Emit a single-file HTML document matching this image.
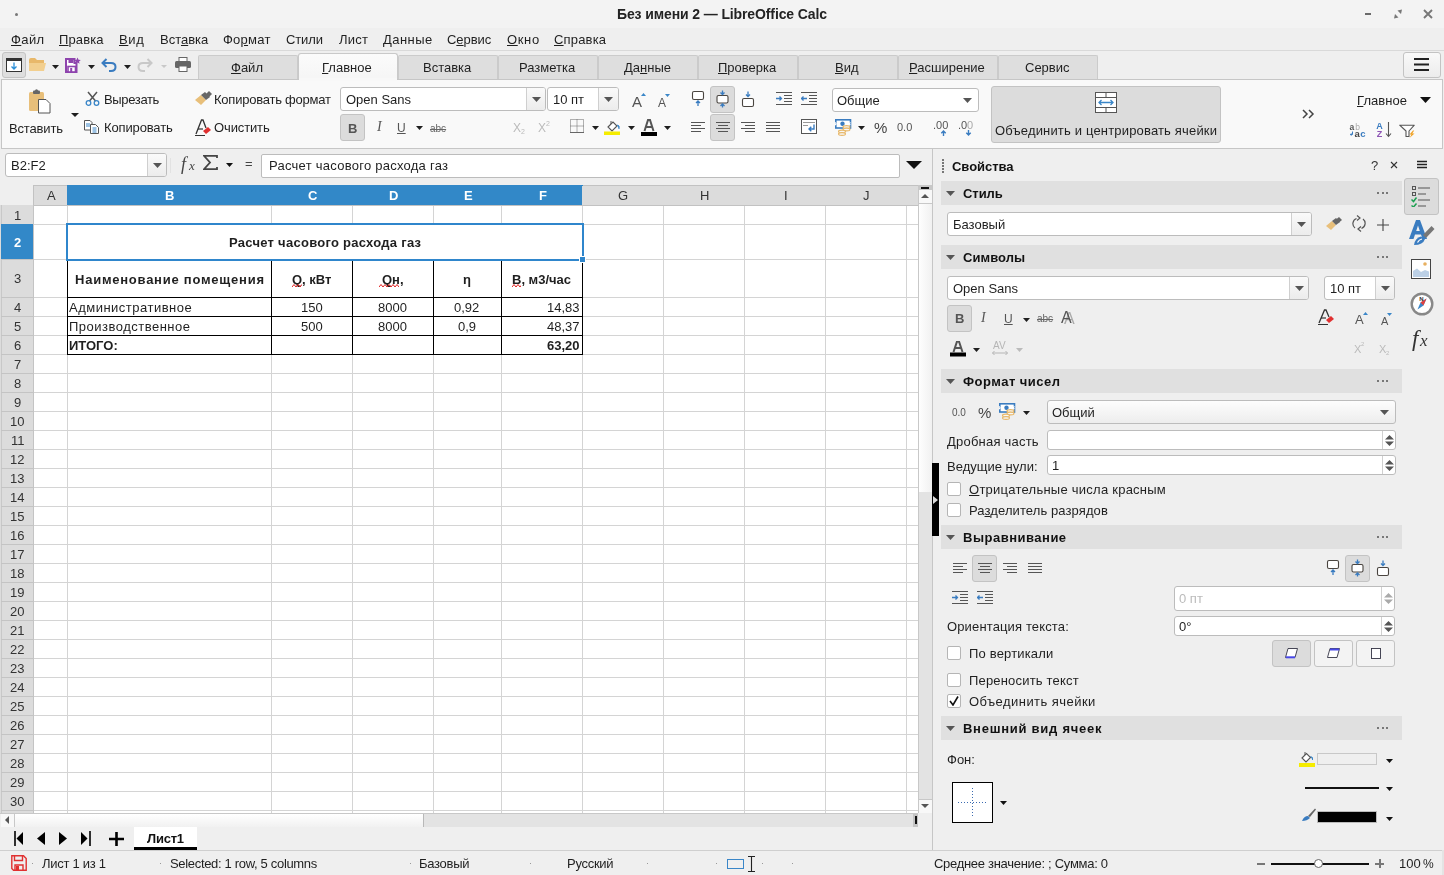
<!DOCTYPE html><html><head><meta charset="utf-8"><title>LibreOffice Calc</title><style>
html,body{margin:0;padding:0;}
body{width:1444px;height:875px;overflow:hidden;position:relative;background:#efefef;font-family:"Liberation Sans",sans-serif;font-size:13px;color:#1f1f1f;}
body div, body svg{position:absolute;}
.t{white-space:nowrap;will-change:transform;}
u{text-decoration:underline;text-underline-offset:1px;}
</style></head><body>
<div style="left:0px;top:0px;width:1444px;height:28px;background:#f3f3f3"></div>
<div style="left:15px;top:13px;width:3px;height:3px;background:#777;border-radius:50%"></div>
<div class="t" style="left:617.00px;top:7.15px;font-size:14px;line-height:14px;color:#232323;font-weight:bold;letter-spacing:-0.113px;">Без имени 2 — LibreOffice Calc</div>
<div style="left:1365px;top:13px;width:6px;height:2px;background:#6a6a6a"></div>
<svg style="left:1393px;top:9px;" width="10" height="10" viewBox="0 0 10 10"><path d="M1 9.5L2 5L5.5 8.5Z M9 0.5L8 5L4.5 1.5Z" fill="#777"/></svg>
<svg style="left:1423px;top:9px;" width="10" height="10" viewBox="0 0 10 10"><path d="M1 1L9 9M9 1L1 9" stroke="#777" stroke-width="1.9"/></svg>
<div style="left:0px;top:28px;width:1444px;height:22px;background:#efefef"></div>
<div style="left:0px;top:50px;width:1444px;height:1px;background:#d9d9d9"></div>
<div class="t" style="left:11.10px;top:33.00px;font-size:13px;line-height:13px;color:#1f1f1f;letter-spacing:0.410px;"><u>Ф</u>айл</div>
<div class="t" style="left:59.40px;top:33.00px;font-size:13px;line-height:13px;color:#1f1f1f;letter-spacing:0.136px;"><u>П</u>равка</div>
<div class="t" style="left:119.20px;top:33.00px;font-size:13px;line-height:13px;color:#1f1f1f;letter-spacing:0.642px;"><u>В</u>ид</div>
<div class="t" style="left:159.60px;top:33.00px;font-size:13px;line-height:13px;color:#1f1f1f;letter-spacing:-0.005px;">Вст<u>а</u>вка</div>
<div class="t" style="left:223.40px;top:33.00px;font-size:13px;line-height:13px;color:#1f1f1f;letter-spacing:0.239px;">Фо<u>р</u>мат</div>
<div class="t" style="left:286.30px;top:33.00px;font-size:13px;line-height:13px;color:#1f1f1f;letter-spacing:-0.113px;">Стили</div>
<div class="t" style="left:339.40px;top:33.00px;font-size:13px;line-height:13px;color:#1f1f1f;letter-spacing:0.217px;">Лист</div>
<div class="t" style="left:383.10px;top:33.00px;font-size:13px;line-height:13px;color:#1f1f1f;letter-spacing:0.449px;"><u>Д</u>анные</div>
<div class="t" style="left:447.40px;top:33.00px;font-size:13px;line-height:13px;color:#1f1f1f;letter-spacing:-0.046px;">С<u>е</u>рвис</div>
<div class="t" style="left:507.20px;top:33.00px;font-size:13px;line-height:13px;color:#1f1f1f;letter-spacing:0.632px;"><u>О</u>кно</div>
<div class="t" style="left:554.40px;top:33.00px;font-size:13px;line-height:13px;color:#1f1f1f;letter-spacing:0.181px;"><u>С</u>правка</div>
<div style="left:0px;top:51px;width:1444px;height:29px;background:#efefef"></div>
<div style="left:2px;top:52px;width:24px;height:26px;background:#dedede;border:1px solid #c4c4c4;border-radius:3px;box-sizing:border-box"></div>
<svg style="left:6px;top:58px;" width="16" height="14" viewBox="0 0 16 14"><rect x="0.5" y="0.5" width="15" height="13" fill="#fff" stroke="#333"/><rect x="0.5" y="0.5" width="15" height="2.5" fill="#333"/><path d="M8 4.5V11M5.5 8.5L8 11L10.5 8.5" stroke="#2a8fd8" stroke-width="1.3" fill="none"/></svg>
<svg style="left:29px;top:58px;" width="17" height="14" viewBox="0 0 17 14"><path d="M0 2Q0 0 2 0H6L8 2H15V13H0Z" fill="#e8b86a"/><path d="M0 5H17L15 13H0Z" fill="#f2cf8f"/></svg>
<svg style="left:52.0px;top:64.5px;" width="7" height="4" viewBox="0 0 7 4"><path d="M0 0H7L3.5 4Z" fill="#1f1f1f"/></svg>
<svg style="left:65px;top:57px;" width="16" height="16" viewBox="0 0 16 16"><path d="M1 2H9.5V6H11.5V15H1Z" fill="#fff" stroke="#8e44ad" stroke-width="2" stroke-linejoin="miter"/><rect x="3.5" y="2" width="5" height="4" fill="#8e44ad"/><rect x="3" y="9.5" width="7.5" height="5.5" fill="#fff" stroke="#8e44ad" stroke-width="1.6"/><rect x="5.2" y="11" width="2" height="4" fill="#8e44ad"/><path d="M12.5 0.5L13.5 2.8L15.8 3L14 4.5L14.6 6.8L12.5 5.5L10.4 6.8L11 4.5L9.2 3L11.5 2.8Z" fill="#8e44ad"/></svg>
<svg style="left:88.0px;top:64.5px;" width="7" height="4" viewBox="0 0 7 4"><path d="M0 0H7L3.5 4Z" fill="#1f1f1f"/></svg>
<svg style="left:101px;top:58px;" width="16" height="14" viewBox="0 0 16 14"><path d="M2 5H10Q14.5 5 14.5 9Q14.5 13 10 13H8" stroke="#3a7cc0" stroke-width="2" fill="none"/><path d="M5.5 1L1.5 5L5.5 9" stroke="#3a7cc0" stroke-width="2" fill="none"/></svg>
<svg style="left:124.0px;top:64.5px;" width="7" height="4" viewBox="0 0 7 4"><path d="M0 0H7L3.5 4Z" fill="#1f1f1f"/></svg>
<svg style="left:137px;top:58px;" width="16" height="14" viewBox="0 0 16 14"><path d="M14 5H6Q1.5 5 1.5 9Q1.5 13 6 13H8" stroke="#c8c8c8" stroke-width="2" fill="none"/><path d="M10.5 1L14.5 5L10.5 9" stroke="#c8c8c8" stroke-width="2" fill="none"/></svg>
<svg style="left:160.5px;top:65.0px;" width="6" height="3" viewBox="0 0 6 3"><path d="M0 0H6L3.0 3Z" fill="#c8c8c8"/></svg>
<svg style="left:175px;top:57px;" width="16" height="15" viewBox="0 0 16 15"><rect x="4" y="0.5" width="8" height="4" fill="#fff" stroke="#666"/><rect x="0" y="4" width="16" height="7" rx="1.5" fill="#666"/><rect x="4" y="9" width="8" height="5.5" fill="#fff" stroke="#666"/></svg>
<div style="left:198px;top:55px;width:100px;height:25px;background:#dedede;border:1px solid #cbcbcb;border-bottom:none;border-radius:2px 2px 0 0;box-sizing:border-box"></div>
<div class="t" style="left:231.02px;top:61.00px;font-size:13px;line-height:13px;color:#1f1f1f;"><u>Ф</u>айл</div>
<div style="left:298px;top:53px;width:100px;height:28px;background:linear-gradient(#fbfbfb,#f5f5f5);border:1px solid #c9c9c9;border-bottom:none;border-radius:3px 3px 0 0;box-sizing:border-box"></div>
<div class="t" style="left:322.16px;top:61.00px;font-size:13px;line-height:13px;color:#1f1f1f;"><u>Г</u>лавное</div>
<div style="left:299px;top:78px;width:98px;height:3px;background:#f8f8f8;z-index:2"></div>
<div style="left:398px;top:55px;width:100px;height:25px;background:#dedede;border:1px solid #cbcbcb;border-bottom:none;border-radius:2px 2px 0 0;box-sizing:border-box"></div>
<div class="t" style="left:422.84px;top:61.00px;font-size:13px;line-height:13px;color:#1f1f1f;">Вставка</div>
<div style="left:498px;top:55px;width:100px;height:25px;background:#dedede;border:1px solid #cbcbcb;border-bottom:none;border-radius:2px 2px 0 0;box-sizing:border-box"></div>
<div class="t" style="left:518.91px;top:61.00px;font-size:13px;line-height:13px;color:#1f1f1f;">Разметка</div>
<div style="left:598px;top:55px;width:100px;height:25px;background:#dedede;border:1px solid #cbcbcb;border-bottom:none;border-radius:2px 2px 0 0;box-sizing:border-box"></div>
<div class="t" style="left:623.52px;top:61.00px;font-size:13px;line-height:13px;color:#1f1f1f;">Да<u>н</u>ные</div>
<div style="left:698px;top:55px;width:100px;height:25px;background:#dedede;border:1px solid #cbcbcb;border-bottom:none;border-radius:2px 2px 0 0;box-sizing:border-box"></div>
<div class="t" style="left:717.88px;top:61.00px;font-size:13px;line-height:13px;color:#1f1f1f;"><u>П</u>роверка</div>
<div style="left:798px;top:55px;width:100px;height:25px;background:#dedede;border:1px solid #cbcbcb;border-bottom:none;border-radius:2px 2px 0 0;box-sizing:border-box"></div>
<div class="t" style="left:835.24px;top:61.00px;font-size:13px;line-height:13px;color:#1f1f1f;"><u>В</u>ид</div>
<div style="left:898px;top:55px;width:100px;height:25px;background:#dedede;border:1px solid #cbcbcb;border-bottom:none;border-radius:2px 2px 0 0;box-sizing:border-box"></div>
<div class="t" style="left:909.10px;top:61.00px;font-size:13px;line-height:13px;color:#1f1f1f;"><u>Р</u>асширение</div>
<div style="left:998px;top:55px;width:100px;height:25px;background:#dedede;border:1px solid #cbcbcb;border-bottom:none;border-radius:2px 2px 0 0;box-sizing:border-box"></div>
<div class="t" style="left:1024.73px;top:61.00px;font-size:13px;line-height:13px;color:#1f1f1f;">Сервис</div>
<div style="left:1403px;top:52px;width:38px;height:26px;background:linear-gradient(#f9f9f9,#ececec);border:1px solid #c3c3c3;border-radius:3px;box-sizing:border-box"></div>
<svg style="left:1414px;top:58px;" width="15" height="13" viewBox="0 0 15 13"><rect x="0" y="0" width="15" height="2" fill="#222"/><rect x="0" y="5.5" width="15" height="2" fill="#222"/><rect x="0" y="11" width="15" height="2" fill="#222"/></svg>
<div style="left:1px;top:79px;width:1442px;height:70px;background:#f9f9f9;border:1px solid #c6c6c6;box-sizing:border-box;z-index:1"></div>
<div style="left:0;top:0;width:1444px;height:875px;z-index:3">
<svg style="left:28px;top:89px;" width="24" height="25" viewBox="0 0 24 25"><rect x="1" y="3" width="15" height="19" rx="1.5" fill="#e8bf7a"/><rect x="5" y="1.5" width="7" height="3.5" rx="1" fill="#666"/><circle cx="8.5" cy="1.8" r="1.5" fill="#666"/><path d="M10.5 10.5H18L22 14.5V24H10.5Z" fill="#fff" stroke="#555"/></svg>
<div class="t" style="left:9.40px;top:122.00px;font-size:13px;line-height:13px;color:#1f1f1f;letter-spacing:-0.158px;">Вставить</div>
<svg style="left:70.5px;top:113.0px;" width="8" height="4" viewBox="0 0 8 4"><path d="M0 0H8L4.0 4Z" fill="#1f1f1f"/></svg>
<svg style="left:85px;top:91px;" width="15" height="15" viewBox="0 0 15 15"><path d="M3 1L10.5 10M12 1L4.5 10" stroke="#555" stroke-width="1.5"/><circle cx="3.5" cy="12" r="2.3" fill="none" stroke="#3a86c8" stroke-width="1.3"/><circle cx="11.5" cy="12" r="2.3" fill="none" stroke="#3a86c8" stroke-width="1.3"/></svg>
<div class="t" style="left:103.60px;top:92.80px;font-size:13px;line-height:13px;color:#1f1f1f;letter-spacing:-0.347px;">Вырезать</div>
<svg style="left:84px;top:120px;" width="15" height="14" viewBox="0 0 15 14"><path d="M0.5 0.5H6L8 2.5V10H0.5Z" fill="#fff" stroke="#555"/><path d="M6.5 4.5H11.5L14.5 7.5V13.5H6.5Z" fill="#fff" stroke="#555"/><path d="M2 4H6M2 6H6M8.5 8H12.5M8.5 10H12.5M8.5 12H12.5" stroke="#3a86c8" stroke-width="1"/></svg>
<div class="t" style="left:103.60px;top:120.60px;font-size:13px;line-height:13px;color:#1f1f1f;letter-spacing:-0.137px;">Копировать</div>
<svg style="left:195px;top:91px;" width="17" height="15" viewBox="0 0 17 15"><path d="M0 9L6 4L11 9L6 14Z" fill="#e8bf7a"/><path d="M6 4L10 1L15 6L11 9Z" fill="#666"/><path d="M11 3L14 0L17 3L14 6Z" fill="#666"/></svg>
<div class="t" style="left:214.30px;top:92.80px;font-size:13px;line-height:13px;color:#1f1f1f;letter-spacing:-0.229px;">Копировать формат</div>
<svg style="left:195px;top:119px;" width="17" height="18" viewBox="0 0 17 18"><path d="M1 15L6.5 1H8L11 9" stroke="#333" stroke-width="1.3" fill="none"/><path d="M3 10H8" stroke="#333" stroke-width="1.2"/><path d="M8 12L13 8L16 11L11 15Z" fill="#e03030"/><path d="M0 16.5H10" stroke="#333" stroke-width="1"/></svg>
<div class="t" style="left:214.30px;top:120.60px;font-size:13px;line-height:13px;color:#1f1f1f;letter-spacing:-0.125px;">Очистить</div>
<div style="left:340px;top:87px;width:206px;height:24px;background:#fff;border:1px solid #bcbcbc;border-radius:3px;box-sizing:border-box"></div>
<div style="left:526px;top:88px;width:19px;height:22px;background:linear-gradient(#fafafa,#ececec);border-left:1px solid #cfcfcf;border-radius:0 2px 2px 0;box-sizing:border-box"></div>
<svg style="left:531.5px;top:96.5px;" width="9" height="5" viewBox="0 0 9 5"><path d="M0 0H9L4.5 5Z" fill="#555"/></svg>
<div class="t" style="left:346.00px;top:92.50px;font-size:13px;line-height:13px;color:#1f1f1f;">Open Sans</div>
<div style="left:547px;top:87px;width:72px;height:24px;background:#fff;border:1px solid #bcbcbc;border-radius:3px;box-sizing:border-box"></div>
<div style="left:598px;top:88px;width:20px;height:22px;background:linear-gradient(#fafafa,#ececec);border-left:1px solid #cfcfcf;border-radius:0 2px 2px 0;box-sizing:border-box"></div>
<svg style="left:604.0px;top:96.5px;" width="9" height="5" viewBox="0 0 9 5"><path d="M0 0H9L4.5 5Z" fill="#555"/></svg>
<div class="t" style="left:553.00px;top:92.50px;font-size:13px;line-height:13px;color:#1f1f1f;">10 пт</div>
<div class="t" style="left:632.00px;top:94.30px;font-size:15px;line-height:15px;color:#555;">A</div>
<svg style="left:641px;top:93px;" width="5" height="3" viewBox="0 0 5 3"><path d="M0 3L2.5 0L5 3Z" fill="#3a86c8"/></svg>
<div class="t" style="left:658.00px;top:96.84px;font-size:12px;line-height:12px;color:#555;">A</div>
<svg style="left:665px;top:94px;" width="5" height="3" viewBox="0 0 5 3"><path d="M0 0L2.5 3L5 0Z" fill="#3a86c8"/></svg>
<div style="left:340px;top:114px;width:25px;height:27px;background:#dcdcdc;border:1px solid #c3c3c3;border-radius:3px;box-sizing:border-box"></div>
<div class="t" style="left:347.80px;top:121.50px;font-size:13px;line-height:13px;color:#555;font-weight:bold;">B</div>
<div class="t" style="left:377.00px;top:120.15px;font-size:14px;line-height:14px;color:#555;font-family:Liberation Serif,serif;font-style:italic;">I</div>
<div class="t" style="left:396.66px;top:122.34px;font-size:12px;line-height:12px;color:#555;text-decoration:underline;">U</div>
<svg style="left:416.0px;top:126.0px;" width="7" height="4" viewBox="0 0 7 4"><path d="M0 0H7L3.5 4Z" fill="#1f1f1f"/></svg>
<div class="t" style="left:430.00px;top:123.53px;font-size:10px;line-height:10px;color:#666;text-decoration:line-through;">abc</div>
<div class="t" style="left:513.00px;top:122.34px;font-size:12px;line-height:12px;color:#bbb;">X</div>
<div class="t" style="left:521.00px;top:128.07px;font-size:7px;line-height:7px;color:#bbb;">2</div>
<div class="t" style="left:538.00px;top:122.34px;font-size:12px;line-height:12px;color:#bbb;">X</div>
<div class="t" style="left:546.00px;top:120.07px;font-size:7px;line-height:7px;color:#bbb;">2</div>
<svg style="left:570px;top:119px;" width="14" height="14" viewBox="0 0 14 14"><path d="M0.5 0.5H13.5V13.5H0.5ZM7 0.5V13.5M0.5 7H13.5" stroke="#666" stroke-width="1" stroke-dasharray="1 1" fill="none"/><path d="M0 13.5H14" stroke="#666" stroke-width="1"/></svg>
<svg style="left:592.0px;top:126.0px;" width="7" height="4" viewBox="0 0 7 4"><path d="M0 0H7L3.5 4Z" fill="#1f1f1f"/></svg>
<svg style="left:604px;top:119px;" width="17" height="16" viewBox="0 0 17 16"><path d="M4 8L9 3L13 7L8 12Z" fill="#fff" stroke="#555" stroke-width="1.1"/><path d="M7 2V5" stroke="#555"/><path d="M13 6Q16 6 15 10" fill="#3a86c8" stroke="#3a86c8"/><rect x="0" y="12.5" width="16" height="3.5" fill="#f5ec00"/></svg>
<svg style="left:628.0px;top:126.0px;" width="7" height="4" viewBox="0 0 7 4"><path d="M0 0H7L3.5 4Z" fill="#1f1f1f"/></svg>
<svg style="left:641px;top:119px;" width="16" height="17" viewBox="0 0 16 17"><path d="M3.5 12L7 1H9L12.5 12M5.2 8H10.8" stroke="#555" stroke-width="2" fill="none"/><rect x="0" y="13" width="16" height="4" fill="#000"/></svg>
<svg style="left:664.0px;top:126.0px;" width="7" height="4" viewBox="0 0 7 4"><path d="M0 0H7L3.5 4Z" fill="#1f1f1f"/></svg>
<svg style="left:691px;top:90px;" width="14" height="17" viewBox="0 0 14 17"><rect x="1.5" y="1.5" width="11" height="8" rx="1.5" fill="#fff" stroke="#4a4540" stroke-width="1.1"/><path d="M7 11V16M5 13L7 11L9 13" stroke="#3a7cc0" stroke-width="1.3" fill="none"/></svg>
<div style="left:710px;top:86px;width:25px;height:27px;background:#dcdcdc;border:1px solid #c3c3c3;border-radius:3px;box-sizing:border-box"></div>
<svg style="left:715px;top:90px;" width="15" height="18" viewBox="0 0 15 18"><rect x="2" y="5.5" width="11" height="7.5" rx="1.5" fill="#fff" stroke="#4a4540" stroke-width="1.1"/><path d="M7.5 0.5V4.5M5.5 2.5L7.5 4.5L9.5 2.5M7.5 17.5V14M5.5 16L7.5 14L9.5 16" stroke="#3a7cc0" stroke-width="1.3" fill="none"/></svg>
<svg style="left:741px;top:90px;" width="14" height="18" viewBox="0 0 14 18"><rect x="1.5" y="8.5" width="11" height="8" rx="1.5" fill="#fff" stroke="#4a4540" stroke-width="1.1"/><path d="M7 1.5V6.5M5 4.5L7 6.5L9 4.5" stroke="#3a7cc0" stroke-width="1.3" fill="none"/></svg>
<svg style="left:776px;top:92px;" width="16" height="13" viewBox="0 0 16 13"><path d="M0 0.5H16M8 3.5H16M8 6.5H16M8 9.5H16M0 12.5H16" stroke="#555"/><path d="M0 6.5H5.5M3.5 4.5L5.5 6.5L3.5 8.5" stroke="#3a7cc0" stroke-width="1.3" fill="none"/></svg>
<svg style="left:801px;top:92px;" width="16" height="13" viewBox="0 0 16 13"><path d="M0 0.5H16M8 3.5H16M8 6.5H16M8 9.5H16M0 12.5H16" stroke="#555"/><path d="M6 6.5H0.5M2.5 4.5L0.5 6.5L2.5 8.5" stroke="#3a7cc0" stroke-width="1.3" fill="none"/></svg>
<div style="left:832px;top:88px;width:147px;height:24px;background:#fff;border:1px solid #bcbcbc;border-radius:3px;box-sizing:border-box"></div>
<div class="t" style="left:837.00px;top:93.50px;font-size:13px;line-height:13px;color:#1f1f1f;">Общие</div>
<svg style="left:962.5px;top:97.5px;" width="9" height="5" viewBox="0 0 9 5"><path d="M0 0H9L4.5 5Z" fill="#555"/></svg>
<div style="left:710px;top:114px;width:25px;height:27px;background:#dcdcdc;border:1px solid #c3c3c3;border-radius:3px;box-sizing:border-box"></div>
<svg style="left:691px;top:122px;" width="14" height="10" viewBox="0 0 14 10"><path d="M0 0.5H14M0 3.5H10M0 6.5H14M0 9.5H10" stroke="#555"/></svg>
<svg style="left:716px;top:122px;" width="14" height="10" viewBox="0 0 14 10"><path d="M0 0.5H14M2 3.5H12M0 6.5H14M2 9.5H12" stroke="#555"/></svg>
<svg style="left:741px;top:122px;" width="14" height="10" viewBox="0 0 14 10"><path d="M0 0.5H14M4 3.5H14M0 6.5H14M4 9.5H14" stroke="#555"/></svg>
<svg style="left:766px;top:122px;" width="14" height="10" viewBox="0 0 14 10"><path d="M0 0.5H14M0 3.5H14M0 6.5H14M0 9.5H14" stroke="#555"/></svg>
<svg style="left:801px;top:119px;" width="16" height="15" viewBox="0 0 16 15"><rect x="0.5" y="0.5" width="15" height="14" fill="#fff" stroke="#555"/><path d="M2 3.5H14M2 6.5H7" stroke="#999" stroke-width="1"/><path d="M13 5.5V10H8M10.3 7.7L8 10L10.3 12.3" stroke="#3a7cc0" stroke-width="1.4" fill="none"/></svg>
<svg style="left:835px;top:119px;" width="17" height="17" viewBox="0 0 17 17"><rect x="0.8" y="0.8" width="14.7" height="8.2" fill="#fff" stroke="#3a7cc0" stroke-width="1.6"/><path d="M0 3.5Q2 4.5 0 6M15.5 3.5Q13.5 4.5 15.5 6" stroke="#fff" stroke-width="1.2" fill="none"/><circle cx="7.5" cy="4.8" r="2.2" fill="#3a7cc0"/><ellipse cx="11.5" cy="8" rx="3.5" ry="1.4" fill="#f7f7f7" stroke="#e8b86a" stroke-width="1.1"/><ellipse cx="11.5" cy="10.5" rx="3.5" ry="1.4" fill="#f7f7f7" stroke="#e8b86a" stroke-width="1.1"/><ellipse cx="7" cy="12.5" rx="3.5" ry="1.4" fill="#f7f7f7" stroke="#e8b86a" stroke-width="1.1"/><ellipse cx="7" cy="15" rx="3.5" ry="1.4" fill="#f7f7f7" stroke="#e8b86a" stroke-width="1.1"/></svg>
<svg style="left:858.0px;top:126.0px;" width="7" height="4" viewBox="0 0 7 4"><path d="M0 0H7L3.5 4Z" fill="#1f1f1f"/></svg>
<div class="t" style="left:874.33px;top:120.30px;font-size:15px;line-height:15px;color:#444;">%</div>
<div class="t" style="left:897.34px;top:122.19px;font-size:11px;line-height:11px;color:#555;">0.0</div>
<div class="t" style="left:933.34px;top:120.19px;font-size:11px;line-height:11px;color:#555;">.00</div>
<svg style="left:940px;top:130px;" width="7" height="6" viewBox="0 0 7 6"><path d="M3.5 6V1M1.3 3.2L3.5 1L5.7 3.2" stroke="#3a7cc0" stroke-width="1.4" fill="none"/></svg>
<div class="t" style="left:958.41px;top:120.19px;font-size:11px;line-height:11px;color:#555;">.0</div>
<div class="t" style="left:967.44px;top:120.19px;font-size:11px;line-height:11px;color:#aaa;">0</div>
<svg style="left:965px;top:130px;" width="7" height="6" viewBox="0 0 7 6"><path d="M3.5 0V5M1.3 2.8L3.5 5L5.7 2.8" stroke="#3a7cc0" stroke-width="1.4" fill="none"/></svg>
<div style="left:991px;top:86px;width:230px;height:57px;background:#dcdcdc;border:1px solid #c3c3c3;border-radius:3px;box-sizing:border-box"></div>
<svg style="left:1095px;top:92px;" width="22" height="21" viewBox="0 0 22 21"><rect x="0.5" y="0.5" width="21" height="20" fill="#fff" stroke="#555"/><path d="M0.5 5.5H21.5M0.5 15.5H21.5M11 0.5V5.5M11 15.5V20.5" stroke="#555"/><path d="M4 10.5H18M6.5 8L4 10.5L6.5 13M15.5 8L18 10.5L15.5 13" stroke="#3a86c8" stroke-width="1.3" fill="none"/></svg>
<div class="t" style="left:994.50px;top:124.00px;font-size:13px;line-height:13px;color:#1f1f1f;letter-spacing:0.173px;">Объединить и центрировать ячейки</div>
<svg style="left:1302px;top:109px;" width="13" height="10" viewBox="0 0 13 10"><path d="M1 1L5 5L1 9M7 1L11 5L7 9" stroke="#444" stroke-width="1.5" fill="none"/></svg>
<div class="t" style="left:1357.00px;top:94.00px;font-size:13px;line-height:13px;color:#1f1f1f;letter-spacing:0.055px;"><u>Г</u>лавное</div>
<svg style="left:1419.5px;top:96.5px;" width="11" height="6" viewBox="0 0 11 6"><path d="M0 0H11L5.5 6Z" fill="#111"/></svg>
<svg style="left:1349px;top:121px;" width="18" height="17" viewBox="0 0 18 17"><text x="0.5" y="8.6" font-size="8.5" font-weight="bold" fill="#555" font-family="Liberation Sans">a</text><text x="6.3" y="8.6" font-size="8.5" fill="#aaa" font-family="Liberation Sans">b</text><text x="5.5" y="15.6" font-size="9.5" font-weight="bold" fill="#444" font-family="Liberation Sans">a</text><text x="11.3" y="15.6" font-size="9.5" font-weight="bold" fill="#3a7cc0" font-family="Liberation Sans">c</text><path d="M3.5 10.5V13.5H1.5M2.5 12.5L1.2 13.5L2.5 14.5" stroke="#3a7cc0" stroke-width="1" fill="none"/></svg>
<svg style="left:1376px;top:121px;" width="18" height="17" viewBox="0 0 18 17"><text x="0.3" y="7.6" font-size="9" font-weight="bold" fill="#3a7cc0" font-family="Liberation Sans">A</text><text x="0.8" y="15.6" font-size="9" font-weight="bold" fill="#8e55b5" font-family="Liberation Sans">Z</text><path d="M12.5 1V15.5M10 12.5L12.5 15.5L15 12.5" stroke="#555" stroke-width="1.1" fill="none"/></svg>
<svg style="left:1399px;top:124px;" width="18" height="14" viewBox="0 0 18 14"><path d="M0.7 1.2H15.3L10 7V12.5H7V7Z" fill="#fff" stroke="#555" stroke-width="1.1" stroke-linejoin="round"/><path d="M14 6.5L10.5 10.5H12.5L10.5 14L15.5 9.5H13.2L15.2 6.5Z" fill="#f0a020"/></svg>
</div>
<div style="left:0px;top:149px;width:932px;height:36px;background:#efefef"></div>
<div style="left:5px;top:153px;width:162px;height:24px;background:#fff;border:1px solid #bcbcbc;border-radius:3px;box-sizing:border-box"></div>
<div style="left:147px;top:154px;width:19px;height:22px;background:linear-gradient(#fafafa,#ececec);border-left:1px solid #cfcfcf;border-radius:0 2px 2px 0;box-sizing:border-box"></div>
<svg style="left:152.5px;top:162.5px;" width="9" height="5" viewBox="0 0 9 5"><path d="M0 0H9L4.5 5Z" fill="#555"/></svg>
<div class="t" style="left:11.00px;top:158.50px;font-size:13px;line-height:13px;color:#1f1f1f;">B2:F2</div>
<div style="left:170px;top:158px;width:1px;height:15px;background:#e2e2e2"></div>
<div class="t" style="left:181.00px;top:154.76px;font-size:18px;line-height:18px;color:#444;font-family:Liberation Serif,serif;font-style:italic;">f</div>
<div class="t" style="left:188.50px;top:159.00px;font-size:13px;line-height:13px;color:#444;font-family:Liberation Serif,serif;font-style:italic;">x</div>
<svg style="left:203px;top:155px;" width="15" height="15" viewBox="0 0 15 15"><path d="M14 3V0.8H1L7 7.5L1 14.2H14V12" stroke="#444" stroke-width="1.8" fill="none"/></svg>
<svg style="left:225.5px;top:162.5px;" width="7" height="4" viewBox="0 0 7 4"><path d="M0 0H7L3.5 4Z" fill="#111"/></svg>
<div class="t" style="left:245.20px;top:157.00px;font-size:13px;line-height:13px;color:#444;">=</div>
<div style="left:261px;top:154px;width:639px;height:24px;background:#fff;border:1px solid #bcbcbc;border-radius:2px;box-sizing:border-box"></div>
<div class="t" style="left:269.00px;top:159.00px;font-size:13px;line-height:13px;color:#1f1f1f;letter-spacing:0.257px;">Расчет часового расхода газ</div>
<svg style="left:905.5px;top:161.0px;" width="16" height="8" viewBox="0 0 16 8"><path d="M0 0H16L8.0 8Z" fill="#111"/></svg>
<div style="left:0px;top:185px;width:918px;height:628px;background:#fff"></div>
<div style="left:0px;top:185px;width:33px;height:20px;background:#efefef"></div>
<div style="left:33px;top:185px;width:34px;height:20px;background:#dcdcdc"></div>
<div style="left:67px;top:185px;width:1px;height:20px;#c4c4c4"></div>
<div class="t" style="left:46.66px;top:189.00px;font-size:13px;line-height:13px;color:#333;">A</div>
<div style="left:67px;top:185px;width:204px;height:20px;background:#3288c8"></div>
<div style="left:271px;top:185px;width:1px;height:20px;background:#2a72a8"></div>
<div class="t" style="left:165.30px;top:189.00px;font-size:13px;line-height:13px;color:#fff;font-weight:bold;">B</div>
<div style="left:271px;top:185px;width:81px;height:20px;background:#3288c8"></div>
<div style="left:352px;top:185px;width:1px;height:20px;background:#2a72a8"></div>
<div class="t" style="left:307.80px;top:189.00px;font-size:13px;line-height:13px;color:#fff;font-weight:bold;">C</div>
<div style="left:352px;top:185px;width:81px;height:20px;background:#3288c8"></div>
<div style="left:433px;top:185px;width:1px;height:20px;background:#2a72a8"></div>
<div class="t" style="left:388.80px;top:189.00px;font-size:13px;line-height:13px;color:#fff;font-weight:bold;">D</div>
<div style="left:433px;top:185px;width:68px;height:20px;background:#3288c8"></div>
<div style="left:501px;top:185px;width:1px;height:20px;background:#2a72a8"></div>
<div class="t" style="left:463.66px;top:189.00px;font-size:13px;line-height:13px;color:#fff;font-weight:bold;">E</div>
<div style="left:501px;top:185px;width:81px;height:20px;background:#3288c8"></div>
<div style="left:582px;top:185px;width:1px;height:20px;#c4c4c4"></div>
<div class="t" style="left:538.53px;top:189.00px;font-size:13px;line-height:13px;color:#fff;font-weight:bold;">F</div>
<div style="left:582px;top:185px;width:81px;height:20px;background:#dcdcdc"></div>
<div style="left:663px;top:185px;width:1px;height:20px;#c4c4c4"></div>
<div class="t" style="left:618.45px;top:189.00px;font-size:13px;line-height:13px;color:#333;">G</div>
<div style="left:663px;top:185px;width:81px;height:20px;background:#dcdcdc"></div>
<div style="left:744px;top:185px;width:1px;height:20px;#c4c4c4"></div>
<div class="t" style="left:699.80px;top:189.00px;font-size:13px;line-height:13px;color:#333;">H</div>
<div style="left:744px;top:185px;width:81px;height:20px;background:#dcdcdc"></div>
<div style="left:825px;top:185px;width:1px;height:20px;#c4c4c4"></div>
<div class="t" style="left:783.70px;top:189.00px;font-size:13px;line-height:13px;color:#333;">I</div>
<div style="left:825px;top:185px;width:81px;height:20px;background:#dcdcdc"></div>
<div style="left:906px;top:185px;width:1px;height:20px;#c4c4c4"></div>
<div class="t" style="left:863.25px;top:189.00px;font-size:13px;line-height:13px;color:#333;">J</div>
<div style="left:906px;top:185px;width:12px;height:20px;background:#dcdcdc"></div>
<div style="left:918px;top:185px;width:1px;height:20px;#c4c4c4"></div>
<div style="left:33px;top:185px;width:885px;height:1px;background:#c2c2c2"></div>
<div style="left:67px;top:185px;width:516px;height:1px;background:#3288c8"></div>
<div style="left:33px;top:205px;width:885px;height:1px;background:#c2c2c2"></div>
<div style="left:33px;top:185px;width:1px;height:20px;background:#c2c2c2"></div>
<div style="left:0px;top:205px;width:33px;height:608px;background:#dcdcdc"></div>
<div style="left:1px;top:205px;width:1px;height:608px;background:#c8c8c8"></div>
<div style="left:1px;top:224px;width:32px;height:1px;background:#c4c4c4"></div>
<div class="t" style="left:13.88px;top:208.50px;font-size:13px;line-height:13px;color:#333;">1</div>
<div style="left:1px;top:224px;width:32px;height:35px;background:#3288c8"></div>
<div style="left:1px;top:259px;width:32px;height:1px;background:#c4c4c4"></div>
<div class="t" style="left:13.88px;top:235.50px;font-size:13px;line-height:13px;color:#fff;font-weight:bold;">2</div>
<div style="left:1px;top:297px;width:32px;height:1px;background:#c4c4c4"></div>
<div class="t" style="left:13.88px;top:272.00px;font-size:13px;line-height:13px;color:#333;">3</div>
<div style="left:1px;top:316px;width:32px;height:1px;background:#c4c4c4"></div>
<div class="t" style="left:13.88px;top:300.50px;font-size:13px;line-height:13px;color:#333;">4</div>
<div style="left:1px;top:335px;width:32px;height:1px;background:#c4c4c4"></div>
<div class="t" style="left:13.88px;top:319.50px;font-size:13px;line-height:13px;color:#333;">5</div>
<div style="left:1px;top:354px;width:32px;height:1px;background:#c4c4c4"></div>
<div class="t" style="left:13.88px;top:338.50px;font-size:13px;line-height:13px;color:#333;">6</div>
<div style="left:1px;top:373px;width:32px;height:1px;background:#c4c4c4"></div>
<div class="t" style="left:13.88px;top:357.50px;font-size:13px;line-height:13px;color:#333;">7</div>
<div style="left:1px;top:392px;width:32px;height:1px;background:#c4c4c4"></div>
<div class="t" style="left:13.88px;top:376.50px;font-size:13px;line-height:13px;color:#333;">8</div>
<div style="left:1px;top:411px;width:32px;height:1px;background:#c4c4c4"></div>
<div class="t" style="left:13.88px;top:395.50px;font-size:13px;line-height:13px;color:#333;">9</div>
<div style="left:1px;top:430px;width:32px;height:1px;background:#c4c4c4"></div>
<div class="t" style="left:10.27px;top:414.50px;font-size:13px;line-height:13px;color:#333;">10</div>
<div style="left:1px;top:449px;width:32px;height:1px;background:#c4c4c4"></div>
<div class="t" style="left:10.75px;top:433.50px;font-size:13px;line-height:13px;color:#333;">11</div>
<div style="left:1px;top:468px;width:32px;height:1px;background:#c4c4c4"></div>
<div class="t" style="left:10.27px;top:452.50px;font-size:13px;line-height:13px;color:#333;">12</div>
<div style="left:1px;top:487px;width:32px;height:1px;background:#c4c4c4"></div>
<div class="t" style="left:10.27px;top:471.50px;font-size:13px;line-height:13px;color:#333;">13</div>
<div style="left:1px;top:506px;width:32px;height:1px;background:#c4c4c4"></div>
<div class="t" style="left:10.27px;top:490.50px;font-size:13px;line-height:13px;color:#333;">14</div>
<div style="left:1px;top:525px;width:32px;height:1px;background:#c4c4c4"></div>
<div class="t" style="left:10.27px;top:509.50px;font-size:13px;line-height:13px;color:#333;">15</div>
<div style="left:1px;top:544px;width:32px;height:1px;background:#c4c4c4"></div>
<div class="t" style="left:10.27px;top:528.50px;font-size:13px;line-height:13px;color:#333;">16</div>
<div style="left:1px;top:563px;width:32px;height:1px;background:#c4c4c4"></div>
<div class="t" style="left:10.27px;top:547.50px;font-size:13px;line-height:13px;color:#333;">17</div>
<div style="left:1px;top:582px;width:32px;height:1px;background:#c4c4c4"></div>
<div class="t" style="left:10.27px;top:566.50px;font-size:13px;line-height:13px;color:#333;">18</div>
<div style="left:1px;top:601px;width:32px;height:1px;background:#c4c4c4"></div>
<div class="t" style="left:10.27px;top:585.50px;font-size:13px;line-height:13px;color:#333;">19</div>
<div style="left:1px;top:620px;width:32px;height:1px;background:#c4c4c4"></div>
<div class="t" style="left:10.27px;top:604.50px;font-size:13px;line-height:13px;color:#333;">20</div>
<div style="left:1px;top:639px;width:32px;height:1px;background:#c4c4c4"></div>
<div class="t" style="left:10.27px;top:623.50px;font-size:13px;line-height:13px;color:#333;">21</div>
<div style="left:1px;top:658px;width:32px;height:1px;background:#c4c4c4"></div>
<div class="t" style="left:10.27px;top:642.50px;font-size:13px;line-height:13px;color:#333;">22</div>
<div style="left:1px;top:677px;width:32px;height:1px;background:#c4c4c4"></div>
<div class="t" style="left:10.27px;top:661.50px;font-size:13px;line-height:13px;color:#333;">23</div>
<div style="left:1px;top:696px;width:32px;height:1px;background:#c4c4c4"></div>
<div class="t" style="left:10.27px;top:680.50px;font-size:13px;line-height:13px;color:#333;">24</div>
<div style="left:1px;top:715px;width:32px;height:1px;background:#c4c4c4"></div>
<div class="t" style="left:10.27px;top:699.50px;font-size:13px;line-height:13px;color:#333;">25</div>
<div style="left:1px;top:734px;width:32px;height:1px;background:#c4c4c4"></div>
<div class="t" style="left:10.27px;top:718.50px;font-size:13px;line-height:13px;color:#333;">26</div>
<div style="left:1px;top:753px;width:32px;height:1px;background:#c4c4c4"></div>
<div class="t" style="left:10.27px;top:737.50px;font-size:13px;line-height:13px;color:#333;">27</div>
<div style="left:1px;top:772px;width:32px;height:1px;background:#c4c4c4"></div>
<div class="t" style="left:10.27px;top:756.50px;font-size:13px;line-height:13px;color:#333;">28</div>
<div style="left:1px;top:791px;width:32px;height:1px;background:#c4c4c4"></div>
<div class="t" style="left:10.27px;top:775.50px;font-size:13px;line-height:13px;color:#333;">29</div>
<div style="left:1px;top:810px;width:32px;height:1px;background:#c4c4c4"></div>
<div class="t" style="left:10.27px;top:794.50px;font-size:13px;line-height:13px;color:#333;">30</div>
<div style="left:1px;top:829px;width:32px;height:1px;background:#c4c4c4"></div>
<div style="left:33px;top:205px;width:1px;height:608px;background:#c4c4c4"></div>
<div style="left:67px;top:206px;width:1px;height:607px;background:#d4d4d4"></div>
<div style="left:271px;top:206px;width:1px;height:607px;background:#d4d4d4"></div>
<div style="left:352px;top:206px;width:1px;height:607px;background:#d4d4d4"></div>
<div style="left:433px;top:206px;width:1px;height:607px;background:#d4d4d4"></div>
<div style="left:501px;top:206px;width:1px;height:607px;background:#d4d4d4"></div>
<div style="left:582px;top:206px;width:1px;height:607px;background:#d4d4d4"></div>
<div style="left:663px;top:206px;width:1px;height:607px;background:#d4d4d4"></div>
<div style="left:744px;top:206px;width:1px;height:607px;background:#d4d4d4"></div>
<div style="left:825px;top:206px;width:1px;height:607px;background:#d4d4d4"></div>
<div style="left:906px;top:206px;width:1px;height:607px;background:#d4d4d4"></div>
<div style="left:34px;top:224px;width:884px;height:1px;background:#d4d4d4"></div>
<div style="left:34px;top:259px;width:884px;height:1px;background:#d4d4d4"></div>
<div style="left:34px;top:297px;width:884px;height:1px;background:#d4d4d4"></div>
<div style="left:34px;top:316px;width:884px;height:1px;background:#d4d4d4"></div>
<div style="left:34px;top:335px;width:884px;height:1px;background:#d4d4d4"></div>
<div style="left:34px;top:354px;width:884px;height:1px;background:#d4d4d4"></div>
<div style="left:34px;top:373px;width:884px;height:1px;background:#d4d4d4"></div>
<div style="left:34px;top:392px;width:884px;height:1px;background:#d4d4d4"></div>
<div style="left:34px;top:411px;width:884px;height:1px;background:#d4d4d4"></div>
<div style="left:34px;top:430px;width:884px;height:1px;background:#d4d4d4"></div>
<div style="left:34px;top:449px;width:884px;height:1px;background:#d4d4d4"></div>
<div style="left:34px;top:468px;width:884px;height:1px;background:#d4d4d4"></div>
<div style="left:34px;top:487px;width:884px;height:1px;background:#d4d4d4"></div>
<div style="left:34px;top:506px;width:884px;height:1px;background:#d4d4d4"></div>
<div style="left:34px;top:525px;width:884px;height:1px;background:#d4d4d4"></div>
<div style="left:34px;top:544px;width:884px;height:1px;background:#d4d4d4"></div>
<div style="left:34px;top:563px;width:884px;height:1px;background:#d4d4d4"></div>
<div style="left:34px;top:582px;width:884px;height:1px;background:#d4d4d4"></div>
<div style="left:34px;top:601px;width:884px;height:1px;background:#d4d4d4"></div>
<div style="left:34px;top:620px;width:884px;height:1px;background:#d4d4d4"></div>
<div style="left:34px;top:639px;width:884px;height:1px;background:#d4d4d4"></div>
<div style="left:34px;top:658px;width:884px;height:1px;background:#d4d4d4"></div>
<div style="left:34px;top:677px;width:884px;height:1px;background:#d4d4d4"></div>
<div style="left:34px;top:696px;width:884px;height:1px;background:#d4d4d4"></div>
<div style="left:34px;top:715px;width:884px;height:1px;background:#d4d4d4"></div>
<div style="left:34px;top:734px;width:884px;height:1px;background:#d4d4d4"></div>
<div style="left:34px;top:753px;width:884px;height:1px;background:#d4d4d4"></div>
<div style="left:34px;top:772px;width:884px;height:1px;background:#d4d4d4"></div>
<div style="left:34px;top:791px;width:884px;height:1px;background:#d4d4d4"></div>
<div style="left:34px;top:810px;width:884px;height:1px;background:#d4d4d4"></div>
<div style="left:34px;top:829px;width:884px;height:1px;background:#d4d4d4"></div>
<div style="left:68px;top:225px;width:514px;height:34px;background:#fff"></div>
<div style="left:67px;top:259px;width:1px;height:96px;background:#000"></div>
<div style="left:271px;top:259px;width:1px;height:96px;background:#000"></div>
<div style="left:352px;top:259px;width:1px;height:96px;background:#000"></div>
<div style="left:433px;top:259px;width:1px;height:96px;background:#000"></div>
<div style="left:501px;top:259px;width:1px;height:96px;background:#000"></div>
<div style="left:582px;top:259px;width:1px;height:96px;background:#000"></div>
<div style="left:67px;top:259px;width:516px;height:1px;background:#000"></div>
<div style="left:67px;top:297px;width:516px;height:1px;background:#000"></div>
<div style="left:67px;top:316px;width:516px;height:1px;background:#000"></div>
<div style="left:67px;top:335px;width:516px;height:1px;background:#000"></div>
<div style="left:67px;top:354px;width:516px;height:1px;background:#000"></div>
<div style="left:66px;top:223px;width:518px;height:38px;border:2px solid #2f86cc;box-sizing:border-box;background:transparent"></div>
<div style="left:580px;top:257px;width:5px;height:5px;background:#2f86cc"></div>
<div style="left:579px;top:256px;width:7px;height:1px;background:#fff"></div>
<div style="left:579px;top:262px;width:7px;height:1px;background:#fff"></div>
<div style="left:579px;top:256px;width:1px;height:7px;background:#fff"></div>
<div style="left:585px;top:256px;width:1px;height:7px;background:#fff"></div>
<div class="t" style="left:228.50px;top:236.00px;font-size:13px;line-height:13px;color:#1f1f1f;font-weight:bold;letter-spacing:0.270px;">Расчет часового расхода газ</div>
<div class="t" style="left:74.50px;top:273.00px;font-size:13px;line-height:13px;color:#1f1f1f;font-weight:bold;letter-spacing:0.758px;">Наименование помещения</div>
<div class="t" style="left:291.80px;top:273.00px;font-size:13px;line-height:13px;color:#1f1f1f;font-weight:bold;">Q, кВт</div>
<div class="t" style="left:381.71px;top:273.00px;font-size:13px;line-height:13px;color:#1f1f1f;font-weight:bold;">Qн,</div>
<div class="t" style="left:463.03px;top:273.00px;font-size:13px;line-height:13px;color:#1f1f1f;font-weight:bold;">η</div>
<div class="t" style="left:511.96px;top:273.00px;font-size:13px;line-height:13px;color:#1f1f1f;font-weight:bold;">В, м3/час</div>
<svg style="left:292px;top:284px;" width="10" height="4" viewBox="0 0 10 4"><path d="M0 3 L0 3 L2 0.5 L4 3 L6 0.5 L8 3 L10 0.5 L12 3" stroke="#e02020" stroke-width="1" fill="none"/></svg>
<svg style="left:379px;top:284px;" width="20" height="4" viewBox="0 0 20 4"><path d="M0 3 L0 3 L2 0.5 L4 3 L6 0.5 L8 3 L10 0.5 L12 3 L14 0.5 L16 3 L18 0.5 L20 3 L22 0.5" stroke="#e02020" stroke-width="1" fill="none"/></svg>
<svg style="left:512px;top:284px;" width="9" height="4" viewBox="0 0 9 4"><path d="M0 3 L0 3 L2 0.5 L4 3 L6 0.5 L8 3 L10 0.5" stroke="#e02020" stroke-width="1" fill="none"/></svg>
<div class="t" style="left:69.00px;top:301.00px;font-size:13px;line-height:13px;color:#1f1f1f;letter-spacing:0.494px;">Административное</div>
<div class="t" style="left:300.65px;top:301.00px;font-size:13px;line-height:13px;color:#1f1f1f;">150</div>
<div class="t" style="left:378.03px;top:301.00px;font-size:13px;line-height:13px;color:#1f1f1f;">8000</div>
<div class="t" style="left:454.34px;top:301.00px;font-size:13px;line-height:13px;color:#1f1f1f;">0,92</div>
<div class="t" style="left:547.45px;top:301.00px;font-size:13px;line-height:13px;color:#1f1f1f;">14,83</div>
<div class="t" style="left:69.00px;top:320.00px;font-size:13px;line-height:13px;color:#1f1f1f;letter-spacing:0.494px;">Производственное</div>
<div class="t" style="left:300.65px;top:320.00px;font-size:13px;line-height:13px;color:#1f1f1f;">500</div>
<div class="t" style="left:378.03px;top:320.00px;font-size:13px;line-height:13px;color:#1f1f1f;">8000</div>
<div class="t" style="left:457.96px;top:320.00px;font-size:13px;line-height:13px;color:#1f1f1f;">0,9</div>
<div class="t" style="left:547.45px;top:320.00px;font-size:13px;line-height:13px;color:#1f1f1f;">48,37</div>
<div class="t" style="left:69.00px;top:339.00px;font-size:13px;line-height:13px;color:#1f1f1f;font-weight:bold;">ИТОГО:</div>
<div class="t" style="left:547.45px;top:339.00px;font-size:13px;line-height:13px;color:#1f1f1f;font-weight:bold;">63,20</div>
<div style="left:918px;top:185px;width:14px;height:628px;background:#efefef"></div>
<div style="left:918px;top:185px;width:14px;height:5px;background:#c8c8c8"></div>
<div style="left:921px;top:187px;width:8px;height:2px;background:#111"></div>
<div style="left:918px;top:190px;width:14px;height:13px;background:#f8f8f8"></div>
<svg style="left:921px;top:194px;" width="8" height="4" viewBox="0 0 8 4"><path d="M0 4H8L4 0Z" fill="#555"/></svg>
<div style="left:918px;top:203px;width:14px;height:1px;background:#c8c8c8"></div>
<div style="left:918px;top:204px;width:14px;height:288px;background:linear-gradient(90deg,#fff,#f1f1f1)"></div>
<div style="left:918px;top:492px;width:14px;height:307px;background:#e3e3e3"></div>
<div style="left:918px;top:799px;width:14px;height:1px;background:#c8c8c8"></div>
<div style="left:918px;top:800px;width:14px;height:13px;background:#f8f8f8"></div>
<svg style="left:921px;top:804px;" width="8" height="4" viewBox="0 0 8 4"><path d="M0 0H8L4 4Z" fill="#555"/></svg>
<div style="left:918px;top:185px;width:1px;height:628px;background:#c8c8c8"></div>
<div style="left:0px;top:813px;width:918px;height:14px;background:#efefef"></div>
<div style="left:0px;top:813px;width:918px;height:1px;background:#c8c8c8"></div>
<div style="left:1px;top:814px;width:13px;height:13px;background:#f8f8f8"></div>
<svg style="left:5px;top:816px;" width="4" height="8" viewBox="0 0 4 8"><path d="M4 0L0 4L4 8Z" fill="#555"/></svg>
<div style="left:14px;top:814px;width:1px;height:13px;background:#c8c8c8"></div>
<div style="left:15px;top:814px;width:408px;height:13px;background:linear-gradient(#fff,#f1f1f1)"></div>
<div style="left:423px;top:814px;width:1px;height:13px;background:#b8b8b8"></div>
<div style="left:424px;top:814px;width:489px;height:13px;background:#e3e3e3"></div>
<div style="left:913px;top:814px;width:5px;height:13px;background:#c4c4c4"></div>
<div style="left:915px;top:816px;width:1.5px;height:8px;background:#111"></div>
<div style="left:932px;top:149px;width:512px;height:701px;background:#efefef"></div>
<div style="left:932px;top:149px;width:1px;height:701px;background:#c6c6c6"></div>
<div style="left:932px;top:463px;width:7px;height:73px;background:#000"></div>
<svg style="left:933px;top:496px;" width="5" height="8" viewBox="0 0 5 8"><path d="M0 0L5 4L0 8Z" fill="#ddd"/></svg>
<div style="left:942px;top:159px;width:2px;height:2px;background:#777"></div>
<div style="left:942px;top:162px;width:2px;height:2px;background:#777"></div>
<div style="left:942px;top:165px;width:2px;height:2px;background:#777"></div>
<div style="left:942px;top:168px;width:2px;height:2px;background:#777"></div>
<div style="left:942px;top:171px;width:2px;height:2px;background:#777"></div>
<div class="t" style="left:951.50px;top:160.00px;font-size:13px;line-height:13px;color:#111;font-weight:bold;letter-spacing:-0.038px;">Свойства</div>
<div class="t" style="left:1370.88px;top:159.00px;font-size:13px;line-height:13px;color:#333;">?</div>
<svg style="left:1390px;top:161px;" width="8" height="8" viewBox="0 0 8 8"><path d="M1 1L7 7M7 1L1 7" stroke="#333" stroke-width="1.1"/></svg>
<svg style="left:1417px;top:160px;" width="10" height="9" viewBox="0 0 10 9"><path d="M0 1.5H10M0 4.5H10M0 7.5H10" stroke="#222" stroke-width="1.3"/></svg>
<div style="left:1404px;top:178px;width:35px;height:37px;background:#dcdcdc;border:1px solid #c3c3c3;border-radius:3px;box-sizing:border-box"></div>
<svg style="left:1411px;top:185px;" width="20" height="22" viewBox="0 0 20 22"><rect x="1.5" y="1.5" width="3" height="3" fill="none" stroke="#555"/><rect x="1.5" y="7.5" width="3" height="3" fill="none" stroke="#555"/><path d="M7 3H19M7 9H15M7 15H19M7 21H15" stroke="#555" stroke-width="1"/><path d="M0.5 14.5L2.5 16.5L5.5 12.5M0.5 20.5L2.5 22L5.5 18.5" stroke="#1aa050" stroke-width="1.5" fill="none"/></svg>
<svg style="left:1409px;top:219px;" width="26" height="27" viewBox="0 0 26 27"><path d="M0 20L7 1H11L18 20H13.5L12 15.5H6L4.5 20ZM7.2 12H10.8L9 6.5Z" fill="#3a7cc0"/><path d="M14 16L22.5 7L25.5 10L17 19Z" fill="#777"/><path d="M5 26Q6 19 12 17.5L16 20Q14 26 5 26Z" fill="#3a7cc0"/><path d="M8.5 23.5Q10 20.5 13 20" stroke="#fff" stroke-width="1.2" fill="none"/></svg>
<svg style="left:1411px;top:259px;" width="21" height="20" viewBox="0 0 21 20"><rect x="0.5" y="0.5" width="19" height="19" fill="#fff" stroke="#444"/><path d="M2 18V12L6 9.5L10 13L14 11L18 12.5V18Z" fill="#bcd0e6"/><circle cx="14" cy="5" r="1.8" fill="#e8b060"/></svg>
<svg style="left:1410px;top:292px;" width="24" height="24" viewBox="0 0 24 24"><circle cx="12" cy="12" r="10.3" fill="#fff" stroke="#888" stroke-width="2.4"/><path d="M16.5 6.5L13.5 13.5L7.5 17.5L10.5 10.5Z" fill="#3a86c8"/><path d="M16.5 6.5L13.5 13.5L10.5 10.5Z" fill="#e04040"/><text x="9.3" y="8.5" font-size="6" font-weight="bold" fill="#333" font-family="Liberation Sans">N</text></svg>
<div class="t" style="left:1412.00px;top:326.53px;font-size:23px;line-height:23px;color:#333;font-family:Liberation Serif,serif;font-style:italic;">f</div>
<div class="t" style="left:1419.50px;top:331.61px;font-size:17px;line-height:17px;color:#333;font-family:Liberation Serif,serif;font-style:italic;">x</div>
<div style="left:941px;top:181px;width:461px;height:24px;background:#e0e0e0"></div>
<svg style="left:946px;top:191px;" width="9" height="5" viewBox="0 0 9 5"><path d="M0 0H9L4.5 5Z" fill="#555"/></svg>
<div class="t" style="left:963.20px;top:187.00px;font-size:13px;line-height:13px;color:#111;font-weight:bold;letter-spacing:-0.046px;">Стиль</div>
<div style="left:1377.0px;top:192px;width:2px;height:2px;background:#777"></div>
<div style="left:1381.5px;top:192px;width:2px;height:2px;background:#777"></div>
<div style="left:1386.0px;top:192px;width:2px;height:2px;background:#777"></div>
<div style="left:947px;top:212px;width:365px;height:24px;background:#fff;border:1px solid #bcbcbc;border-radius:3px;box-sizing:border-box"></div>
<div style="left:1291px;top:213px;width:20px;height:22px;background:linear-gradient(#fafafa,#ececec);border-left:1px solid #cfcfcf;border-radius:0 2px 2px 0;box-sizing:border-box"></div>
<svg style="left:1297.0px;top:221.5px;" width="9" height="5" viewBox="0 0 9 5"><path d="M0 0H9L4.5 5Z" fill="#555"/></svg>
<div class="t" style="left:953.00px;top:217.50px;font-size:13px;line-height:13px;color:#1f1f1f;">Базовый</div>
<svg style="left:1326px;top:217px;" width="16" height="14" viewBox="0 0 16 14"><path d="M0 9L6 4L10 8L5 13Z" fill="#e8bf7a"/><path d="M6 4L10 1L14 5L10 8Z" fill="#666"/><path d="M10 2.5L13 0L16 3L13 5.5Z" fill="#666"/></svg>
<svg style="left:1352px;top:215px;" width="14" height="17" viewBox="0 0 14 17"><path d="M4.5 3.5A5.5 5.5 0 0 0 3 13M9.5 13.5A5.5 5.5 0 0 0 11 4" stroke="#555" stroke-width="1.2" fill="none"/><path d="M5 0.5L8 3L5 5.5M9 11.5L6 14L9 16.5" stroke="#555" stroke-width="1.2" fill="none"/></svg>
<svg style="left:1377px;top:219px;" width="12" height="12" viewBox="0 0 12 12"><path d="M6 0V12M0 6H12" stroke="#444" stroke-width="1.1"/></svg>
<div style="left:941px;top:245px;width:461px;height:24px;background:#e0e0e0"></div>
<svg style="left:946px;top:255px;" width="9" height="5" viewBox="0 0 9 5"><path d="M0 0H9L4.5 5Z" fill="#555"/></svg>
<div class="t" style="left:963.20px;top:251.00px;font-size:13px;line-height:13px;color:#111;font-weight:bold;letter-spacing:0.070px;">Символы</div>
<div style="left:1377.0px;top:256px;width:2px;height:2px;background:#777"></div>
<div style="left:1381.5px;top:256px;width:2px;height:2px;background:#777"></div>
<div style="left:1386.0px;top:256px;width:2px;height:2px;background:#777"></div>
<div style="left:947px;top:276px;width:362px;height:24px;background:#fff;border:1px solid #bcbcbc;border-radius:3px;box-sizing:border-box"></div>
<div style="left:1289px;top:277px;width:19px;height:22px;background:linear-gradient(#fafafa,#ececec);border-left:1px solid #cfcfcf;border-radius:0 2px 2px 0;box-sizing:border-box"></div>
<svg style="left:1294.5px;top:285.5px;" width="9" height="5" viewBox="0 0 9 5"><path d="M0 0H9L4.5 5Z" fill="#555"/></svg>
<div class="t" style="left:953.00px;top:281.50px;font-size:13px;line-height:13px;color:#1f1f1f;">Open Sans</div>
<div style="left:1324px;top:276px;width:71px;height:24px;background:#fff;border:1px solid #bcbcbc;border-radius:3px;box-sizing:border-box"></div>
<div style="left:1375px;top:277px;width:19px;height:22px;background:linear-gradient(#fafafa,#ececec);border-left:1px solid #cfcfcf;border-radius:0 2px 2px 0;box-sizing:border-box"></div>
<svg style="left:1380.5px;top:285.5px;" width="9" height="5" viewBox="0 0 9 5"><path d="M0 0H9L4.5 5Z" fill="#555"/></svg>
<div class="t" style="left:1330.00px;top:281.50px;font-size:13px;line-height:13px;color:#1f1f1f;">10 пт</div>
<div style="left:947px;top:305px;width:25px;height:27px;background:#dcdcdc;border:1px solid #c3c3c3;border-radius:3px;box-sizing:border-box"></div>
<div class="t" style="left:954.80px;top:312.00px;font-size:13px;line-height:13px;color:#555;font-weight:bold;">B</div>
<div class="t" style="left:981.00px;top:311.15px;font-size:14px;line-height:14px;color:#555;font-family:Liberation Serif,serif;font-style:italic;">I</div>
<div class="t" style="left:1004.16px;top:312.84px;font-size:12px;line-height:12px;color:#555;text-decoration:underline;">U</div>
<svg style="left:1023.0px;top:317.5px;" width="7" height="4" viewBox="0 0 7 4"><path d="M0 0H7L3.5 4Z" fill="#1f1f1f"/></svg>
<div class="t" style="left:1037.00px;top:314.04px;font-size:10px;line-height:10px;color:#666;text-decoration:line-through;">abc</div>
<div class="t" style="left:1064.00px;top:311.46px;font-size:16px;line-height:16px;color:#aaa;">A</div>
<div class="t" style="left:1061.00px;top:309.96px;font-size:16px;line-height:16px;color:#555;">A</div>
<svg style="left:1318px;top:309px;" width="18" height="17" viewBox="0 0 18 17"><path d="M1 14L6.5 1H8L11 8" stroke="#333" stroke-width="1.3" fill="none"/><path d="M3 9H8" stroke="#333" stroke-width="1.2"/><path d="M8 11L13 7L16 10L11 14Z" fill="#e03030"/><path d="M0 15.5H10" stroke="#333" stroke-width="1"/></svg>
<div class="t" style="left:1355.00px;top:313.00px;font-size:13px;line-height:13px;color:#555;">A</div>
<svg style="left:1363px;top:312px;" width="5" height="3" viewBox="0 0 5 3"><path d="M0 3L2.5 0L5 3Z" fill="#3a86c8"/></svg>
<div class="t" style="left:1381.00px;top:315.69px;font-size:11px;line-height:11px;color:#555;">A</div>
<svg style="left:1387px;top:313px;" width="5" height="3" viewBox="0 0 5 3"><path d="M0 0L2.5 3L5 0Z" fill="#3a86c8"/></svg>
<svg style="left:950px;top:341px;" width="16" height="16" viewBox="0 0 16 16"><path d="M3.5 11L7 0.5H9L12.5 11M5.2 7H10.8" stroke="#555" stroke-width="2" fill="none"/><rect x="0" y="11.5" width="16" height="4" fill="#000"/></svg>
<svg style="left:972.5px;top:347.5px;" width="7" height="4" viewBox="0 0 7 4"><path d="M0 0H7L3.5 4Z" fill="#1f1f1f"/></svg>
<div class="t" style="left:992.50px;top:340.54px;font-size:10px;line-height:10px;color:#b5b5b5;">AV</div>
<svg style="left:992px;top:350px;" width="16" height="6" viewBox="0 0 16 6"><path d="M0.5 3H15.5M2.5 1L0.5 3L2.5 5M13.5 1L15.5 3L13.5 5" stroke="#b5b5b5" stroke-width="1" fill="none"/></svg>
<svg style="left:1015.5px;top:347.5px;" width="7" height="4" viewBox="0 0 7 4"><path d="M0 0H7L3.5 4Z" fill="#bbb"/></svg>
<div class="t" style="left:1354.00px;top:343.69px;font-size:11px;line-height:11px;color:#bbb;">X</div>
<div class="t" style="left:1361.00px;top:340.92px;font-size:6px;line-height:6px;color:#bbb;">2</div>
<div class="t" style="left:1379.00px;top:343.69px;font-size:11px;line-height:11px;color:#bbb;">X</div>
<div class="t" style="left:1386.00px;top:349.92px;font-size:6px;line-height:6px;color:#bbb;">2</div>
<div style="left:941px;top:369px;width:461px;height:24px;background:#e0e0e0"></div>
<svg style="left:946px;top:379px;" width="9" height="5" viewBox="0 0 9 5"><path d="M0 0H9L4.5 5Z" fill="#555"/></svg>
<div class="t" style="left:963.20px;top:375.00px;font-size:13px;line-height:13px;color:#111;font-weight:bold;letter-spacing:0.482px;">Формат чисел</div>
<div style="left:1377.0px;top:380px;width:2px;height:2px;background:#777"></div>
<div style="left:1381.5px;top:380px;width:2px;height:2px;background:#777"></div>
<div style="left:1386.0px;top:380px;width:2px;height:2px;background:#777"></div>
<div class="t" style="left:952.05px;top:407.54px;font-size:10px;line-height:10px;color:#555;">0.0</div>
<div class="t" style="left:978.33px;top:405.30px;font-size:15px;line-height:15px;color:#444;">%</div>
<svg style="left:999px;top:403px;" width="17" height="17" viewBox="0 0 17 17"><rect x="0.8" y="0.8" width="14.7" height="8.2" fill="#fff" stroke="#3a7cc0" stroke-width="1.6"/><path d="M0 3.5Q2 4.5 0 6M15.5 3.5Q13.5 4.5 15.5 6" stroke="#fff" stroke-width="1.2" fill="none"/><circle cx="7.5" cy="4.8" r="2.2" fill="#3a7cc0"/><ellipse cx="11.5" cy="8" rx="3.5" ry="1.4" fill="#f7f7f7" stroke="#e8b86a" stroke-width="1.1"/><ellipse cx="11.5" cy="10.5" rx="3.5" ry="1.4" fill="#f7f7f7" stroke="#e8b86a" stroke-width="1.1"/><ellipse cx="7" cy="12.5" rx="3.5" ry="1.4" fill="#f7f7f7" stroke="#e8b86a" stroke-width="1.1"/><ellipse cx="7" cy="15" rx="3.5" ry="1.4" fill="#f7f7f7" stroke="#e8b86a" stroke-width="1.1"/></svg>
<svg style="left:1023.0px;top:410.5px;" width="7" height="4" viewBox="0 0 7 4"><path d="M0 0H7L3.5 4Z" fill="#1f1f1f"/></svg>
<div style="left:1047px;top:400px;width:349px;height:24px;background:linear-gradient(#fdfdfd,#ededed);border:1px solid #bcbcbc;border-radius:3px;box-sizing:border-box"></div>
<div class="t" style="left:1052.00px;top:405.50px;font-size:13px;line-height:13px;color:#1f1f1f;">Общий</div>
<svg style="left:1380.0px;top:409.5px;" width="9" height="5" viewBox="0 0 9 5"><path d="M0 0H9L4.5 5Z" fill="#555"/></svg>
<div class="t" style="left:947.00px;top:434.50px;font-size:13px;line-height:13px;color:#1f1f1f;letter-spacing:0.217px;"><u>Д</u>робная часть</div>
<div style="left:1047px;top:430px;width:349px;height:20px;background:#fff;border:1px solid #bcbcbc;border-radius:3px;box-sizing:border-box"></div>
<div style="left:1382px;top:431px;width:1px;height:18px;background:#d0d0d0"></div>
<svg style="left:1384.5px;top:434.5px;" width="9" height="11" viewBox="0 0 9 11"><path d="M0 4.5L4.5 0L9 4.5Z M0 6.5L4.5 11L9 6.5Z" fill="#555"/></svg>
<div class="t" style="left:947.00px;top:459.50px;font-size:13px;line-height:13px;color:#1f1f1f;letter-spacing:0.012px;">Ведущие <u>н</u>ули:</div>
<div style="left:1047px;top:455px;width:349px;height:20px;background:#fff;border:1px solid #bcbcbc;border-radius:3px;box-sizing:border-box"></div>
<div style="left:1382px;top:456px;width:1px;height:18px;background:#d0d0d0"></div>
<svg style="left:1384.5px;top:459.5px;" width="9" height="11" viewBox="0 0 9 11"><path d="M0 4.5L4.5 0L9 4.5Z M0 6.5L4.5 11L9 6.5Z" fill="#555"/></svg>
<div class="t" style="left:1052.00px;top:458.50px;font-size:13px;line-height:13px;color:#1f1f1f;">1</div>
<div style="left:947px;top:482px;width:14px;height:14px;background:#fff;border:1px solid #b5b5b5;border-radius:2px;box-sizing:border-box"></div>
<div class="t" style="left:969.20px;top:483.00px;font-size:13px;line-height:13px;color:#1f1f1f;letter-spacing:0.248px;"><u>О</u>трицательные числа красным</div>
<div style="left:947px;top:503px;width:14px;height:14px;background:#fff;border:1px solid #b5b5b5;border-radius:2px;box-sizing:border-box"></div>
<div class="t" style="left:969.20px;top:504.00px;font-size:13px;line-height:13px;color:#1f1f1f;letter-spacing:0.099px;">Ра<u>з</u>делитель разрядов</div>
<div style="left:941px;top:525px;width:461px;height:24px;background:#e0e0e0"></div>
<svg style="left:946px;top:535px;" width="9" height="5" viewBox="0 0 9 5"><path d="M0 0H9L4.5 5Z" fill="#555"/></svg>
<div class="t" style="left:963.20px;top:531.00px;font-size:13px;line-height:13px;color:#111;font-weight:bold;letter-spacing:0.498px;">Выравнивание</div>
<div style="left:1377.0px;top:536px;width:2px;height:2px;background:#777"></div>
<div style="left:1381.5px;top:536px;width:2px;height:2px;background:#777"></div>
<div style="left:1386.0px;top:536px;width:2px;height:2px;background:#777"></div>
<div style="left:972px;top:555px;width:25px;height:27px;background:#dcdcdc;border:1px solid #c3c3c3;border-radius:3px;box-sizing:border-box"></div>
<svg style="left:953px;top:563px;" width="14" height="10" viewBox="0 0 14 10"><path d="M0 0.5H14M0 3.5H10M0 6.5H14M0 9.5H10" stroke="#555"/></svg>
<svg style="left:978px;top:563px;" width="14" height="10" viewBox="0 0 14 10"><path d="M0 0.5H14M2 3.5H12M0 6.5H14M2 9.5H12" stroke="#555"/></svg>
<svg style="left:1003px;top:563px;" width="14" height="10" viewBox="0 0 14 10"><path d="M0 0.5H14M4 3.5H14M0 6.5H14M4 9.5H14" stroke="#555"/></svg>
<svg style="left:1028px;top:563px;" width="14" height="10" viewBox="0 0 14 10"><path d="M0 0.5H14M0 3.5H14M0 6.5H14M0 9.5H14" stroke="#555"/></svg>
<svg style="left:1326px;top:559px;" width="14" height="17" viewBox="0 0 14 17"><rect x="1.5" y="1.5" width="11" height="8" rx="1.5" fill="#fff" stroke="#4a4540" stroke-width="1.1"/><path d="M7 11V16M5 13L7 11L9 13" stroke="#3a7cc0" stroke-width="1.3" fill="none"/></svg>
<div style="left:1345px;top:555px;width:25px;height:27px;background:#dcdcdc;border:1px solid #c3c3c3;border-radius:3px;box-sizing:border-box"></div>
<svg style="left:1350px;top:559px;" width="15" height="18" viewBox="0 0 15 18"><rect x="2" y="5.5" width="11" height="7.5" rx="1.5" fill="#fff" stroke="#4a4540" stroke-width="1.1"/><path d="M7.5 0.5V4.5M5.5 2.5L7.5 4.5L9.5 2.5M7.5 17.5V14M5.5 16L7.5 14L9.5 16" stroke="#3a7cc0" stroke-width="1.3" fill="none"/></svg>
<svg style="left:1376px;top:559px;" width="14" height="18" viewBox="0 0 14 18"><rect x="1.5" y="8.5" width="11" height="8" rx="1.5" fill="#fff" stroke="#4a4540" stroke-width="1.1"/><path d="M7 1.5V6.5M5 4.5L7 6.5L9 4.5" stroke="#3a7cc0" stroke-width="1.3" fill="none"/></svg>
<svg style="left:952px;top:591px;" width="16" height="13" viewBox="0 0 16 13"><path d="M0 0.5H16M8 3.5H16M8 6.5H16M8 9.5H16M0 12.5H16" stroke="#555"/><path d="M0 6.5H5.5M3.5 4.5L5.5 6.5L3.5 8.5" stroke="#3a7cc0" stroke-width="1.3" fill="none"/></svg>
<svg style="left:977px;top:591px;" width="16" height="13" viewBox="0 0 16 13"><path d="M0 0.5H16M8 3.5H16M8 6.5H16M8 9.5H16M0 12.5H16" stroke="#555"/><path d="M6 6.5H0.5M2.5 4.5L0.5 6.5L2.5 8.5" stroke="#3a7cc0" stroke-width="1.3" fill="none"/></svg>
<div style="left:1174px;top:586px;width:221px;height:25px;background:#fff;border:1px solid #bcbcbc;border-radius:3px;box-sizing:border-box"></div>
<div style="left:1381px;top:587px;width:1px;height:23px;background:#d0d0d0"></div>
<svg style="left:1383.5px;top:593.0px;" width="9" height="11" viewBox="0 0 9 11"><path d="M0 4.5L4.5 0L9 4.5Z M0 6.5L4.5 11L9 6.5Z" fill="#aaa"/></svg>
<div class="t" style="left:1179.00px;top:592.00px;font-size:13px;line-height:13px;color:#bbb;">0 пт</div>
<div class="t" style="left:947.00px;top:620.00px;font-size:13px;line-height:13px;color:#1f1f1f;letter-spacing:0.137px;">Ориентация текста:</div>
<div style="left:1174px;top:616px;width:221px;height:20px;background:#fff;border:1px solid #bcbcbc;border-radius:3px;box-sizing:border-box"></div>
<div style="left:1381px;top:617px;width:1px;height:18px;background:#d0d0d0"></div>
<svg style="left:1383.5px;top:620.5px;" width="9" height="11" viewBox="0 0 9 11"><path d="M0 4.5L4.5 0L9 4.5Z M0 6.5L4.5 11L9 6.5Z" fill="#555"/></svg>
<div class="t" style="left:1179.00px;top:619.50px;font-size:13px;line-height:13px;color:#1f1f1f;">0°</div>
<div style="left:947px;top:646px;width:14px;height:14px;background:#fff;border:1px solid #b5b5b5;border-radius:2px;box-sizing:border-box"></div>
<div class="t" style="left:969.20px;top:647.00px;font-size:13px;line-height:13px;color:#1f1f1f;letter-spacing:0.172px;">По вертикали</div>
<div style="left:1272px;top:640px;width:39px;height:27px;background:#dcdcdc;border:1px solid #c3c3c3;border-radius:3px;box-sizing:border-box"></div>
<div style="left:1314px;top:640px;width:39px;height:27px;background:#f3f3f3;border:1px solid #c3c3c3;border-radius:3px;box-sizing:border-box"></div>
<div style="left:1356px;top:640px;width:39px;height:27px;background:#f3f3f3;border:1px solid #c3c3c3;border-radius:3px;box-sizing:border-box"></div>
<svg style="left:1284px;top:647px;" width="15" height="13" viewBox="0 0 15 13"><path d="M4 1.5H13.5L11 10.5H1.5Z" fill="#fff" stroke="#334" stroke-width="0.9"/><path d="M1.8 10.3H11" stroke="#4848e8" stroke-width="2"/></svg>
<svg style="left:1326px;top:647px;" width="15" height="13" viewBox="0 0 15 13"><path d="M4 1.5H13.5L11 10.5H1.5Z" fill="#fff" stroke="#334" stroke-width="0.9"/><path d="M4 2.5H13.2" stroke="#4848e8" stroke-width="2"/></svg>
<svg style="left:1371px;top:648px;" width="11" height="12" viewBox="0 0 11 12"><rect x="0.5" y="0.5" width="9" height="10" fill="#fff" stroke="#334" stroke-width="0.9"/></svg>
<div style="left:947px;top:673px;width:14px;height:14px;background:#fff;border:1px solid #b5b5b5;border-radius:2px;box-sizing:border-box"></div>
<div class="t" style="left:969.20px;top:674.00px;font-size:13px;line-height:13px;color:#1f1f1f;letter-spacing:0.182px;">Переносить текст</div>
<div style="left:947px;top:694px;width:14px;height:14px;background:#fff;border:1px solid #b5b5b5;border-radius:2px;box-sizing:border-box"></div>
<svg style="left:949px;top:696px;" width="10" height="10" viewBox="0 0 10 10"><path d="M1 5L4 9L9 0.5" stroke="#111" stroke-width="1.6" fill="none"/></svg>
<div class="t" style="left:969.20px;top:695.00px;font-size:13px;line-height:13px;color:#1f1f1f;letter-spacing:0.451px;">Объединить ячейки</div>
<div style="left:941px;top:716px;width:461px;height:24px;background:#e0e0e0"></div>
<svg style="left:946px;top:726px;" width="9" height="5" viewBox="0 0 9 5"><path d="M0 0H9L4.5 5Z" fill="#555"/></svg>
<div class="t" style="left:963.20px;top:722.00px;font-size:13px;line-height:13px;color:#111;font-weight:bold;letter-spacing:0.733px;">Внешний вид ячеек</div>
<div style="left:1377.0px;top:727px;width:2px;height:2px;background:#777"></div>
<div style="left:1381.5px;top:727px;width:2px;height:2px;background:#777"></div>
<div style="left:1386.0px;top:727px;width:2px;height:2px;background:#777"></div>
<div class="t" style="left:947.00px;top:753.00px;font-size:13px;line-height:13px;color:#1f1f1f;">Фон:</div>
<svg style="left:1299px;top:751px;" width="16" height="17" viewBox="0 0 16 17"><path d="M3 7L7.5 2.5L11.5 6.5L7 11Z" fill="#fff" stroke="#555" stroke-width="1.1"/><path d="M6 1V4" stroke="#555"/><path d="M11.5 5.5Q14.5 6 13.5 9" fill="#3a86c8" stroke="#3a86c8"/><rect x="0" y="12" width="16" height="4" fill="#f5ec00"/></svg>
<div style="left:1317px;top:753px;width:60px;height:12px;background:#efefef;border:1px solid #c8c8c8;box-sizing:border-box"></div>
<svg style="left:1386.0px;top:758.5px;" width="7" height="4" viewBox="0 0 7 4"><path d="M0 0H7L3.5 4Z" fill="#111"/></svg>
<div style="left:1305px;top:787px;width:74px;height:1.5px;background:#111"></div>
<svg style="left:1386.0px;top:786.5px;" width="7" height="4" viewBox="0 0 7 4"><path d="M0 0H7L3.5 4Z" fill="#111"/></svg>
<svg style="left:1301px;top:808px;" width="15" height="14" viewBox="0 0 15 14"><path d="M7 8L14 0.5L15 1.5L9 9Z" fill="#666"/><path d="M1 13Q3 8 7 8L9 10Q6 13 1 13Z" fill="#3a7cc0"/></svg>
<div style="left:1317px;top:811px;width:60px;height:12px;background:#000;border:1px solid #bbb;box-sizing:border-box"></div>
<svg style="left:1386.0px;top:816.5px;" width="7" height="4" viewBox="0 0 7 4"><path d="M0 0H7L3.5 4Z" fill="#111"/></svg>
<div style="left:952px;top:782px;width:41px;height:41px;background:#fff;border:1px solid #000;box-sizing:border-box"></div>
<svg style="left:956px;top:786px;" width="33" height="33" viewBox="0 0 33 33"><path d="M16.5 2V31M2 16.5H31" stroke="#3a6ab0" stroke-width="1" stroke-dasharray="1 2"/></svg>
<svg style="left:1000.0px;top:801.0px;" width="7" height="4" viewBox="0 0 7 4"><path d="M0 0H7L3.5 4Z" fill="#111"/></svg>
<div style="left:0px;top:827px;width:932px;height:23px;background:#efefef"></div>
<svg style="left:14px;top:831px;" width="9" height="15" viewBox="0 0 9 15"><path d="M1 0V15" stroke="#000" stroke-width="1.6"/><path d="M9 1V14L2.5 7.5Z" fill="#000"/></svg>
<svg style="left:37px;top:831px;" width="8" height="15" viewBox="0 0 8 15"><path d="M8 1V14L0 7.5Z" fill="#000"/></svg>
<svg style="left:59px;top:831px;" width="8" height="15" viewBox="0 0 8 15"><path d="M0 1V14L8 7.5Z" fill="#000"/></svg>
<svg style="left:81px;top:831px;" width="10" height="15" viewBox="0 0 10 15"><path d="M9 0V15" stroke="#000" stroke-width="1.6"/><path d="M0 1V14L6.5 7.5Z" fill="#000"/></svg>
<svg style="left:109px;top:832px;" width="15" height="14" viewBox="0 0 15 14"><path d="M7.5 0V14M0 7H15" stroke="#000" stroke-width="2.6"/></svg>
<div style="left:134px;top:827px;width:63px;height:23px;background:#fff"></div>
<div style="left:134px;top:847px;width:63px;height:3px;background:#000"></div>
<div class="t" style="left:147.00px;top:832.00px;font-size:13px;line-height:13px;color:#111;font-weight:bold;letter-spacing:-0.234px;">Лист1</div>
<div style="left:0px;top:850px;width:1444px;height:25px;background:#efefef"></div>
<div style="left:0px;top:850px;width:1444px;height:1px;background:#cfcfcf"></div>
<svg style="left:11px;top:855px;" width="16" height="16" viewBox="0 0 16 16"><path d="M0.8 0.8H12.5L15.2 3.5V15.2H2.5L0.8 13.5Z" fill="none" stroke="#e03030" stroke-width="1.4"/><path d="M3.5 1V5.5H11.5V1M4 15V10H12V15" fill="none" stroke="#e03030" stroke-width="1.4"/><rect x="5" y="11" width="3" height="4" fill="#e03030"/></svg>
<div class="t" style="left:41.60px;top:857.00px;font-size:13px;line-height:13px;color:#1f1f1f;letter-spacing:-0.277px;">Лист 1 из 1</div>
<div class="t" style="left:170.20px;top:857.00px;font-size:13px;line-height:13px;color:#1f1f1f;letter-spacing:-0.324px;">Selected: 1 row, 5 columns</div>
<div class="t" style="left:418.90px;top:857.00px;font-size:13px;line-height:13px;color:#1f1f1f;letter-spacing:-0.281px;">Базовый</div>
<div class="t" style="left:567.00px;top:857.00px;font-size:13px;line-height:13px;color:#1f1f1f;letter-spacing:-0.275px;">Русский</div>
<div style="left:727px;top:859px;width:17px;height:10px;border:1.5px solid #3a86c8;box-sizing:border-box"></div>
<svg style="left:747px;top:856px;" width="9" height="16" viewBox="0 0 9 16"><path d="M1 0.5H8M1 15.5H8M4.5 0.5V15.5" stroke="#222" stroke-width="1.1"/></svg>
<div style="left:32px;top:863px;width:1px;height:1px;background:#999"></div>
<div style="left:160px;top:863px;width:1px;height:1px;background:#999"></div>
<div style="left:410px;top:863px;width:1px;height:1px;background:#999"></div>
<div style="left:530px;top:863px;width:1px;height:1px;background:#999"></div>
<div style="left:647px;top:863px;width:1px;height:1px;background:#999"></div>
<div style="left:716px;top:863px;width:1px;height:1px;background:#999"></div>
<div style="left:762px;top:863px;width:1px;height:1px;background:#999"></div>
<div style="left:792px;top:863px;width:1px;height:1px;background:#999"></div>
<div class="t" style="left:933.60px;top:857.00px;font-size:13px;line-height:13px;color:#1f1f1f;letter-spacing:-0.293px;">Среднее значение: ; Сумма: 0</div>
<div style="left:1257px;top:862.5px;width:8px;height:2px;background:#777"></div>
<div style="left:1271px;top:862.5px;width:98px;height:2px;background:#111"></div>
<div style="left:1314px;top:859px;width:9px;height:9px;background:#fff;border:1px solid #666;border-radius:50%;box-sizing:border-box"></div>
<div style="left:1375px;top:862.5px;width:9px;height:2px;background:#777"></div>
<div style="left:1378.5px;top:859px;width:2px;height:9px;background:#777"></div>
<div style="left:1442px;top:850px;width:2px;height:25px;background:#e4e4e4"></div>
<div class="t" style="left:1398.50px;top:857.00px;font-size:13px;line-height:13px;color:#1f1f1f;">100</div>
<div class="t" style="left:1422.50px;top:857.84px;font-size:12px;line-height:12px;color:#1f1f1f;">%</div>
</body></html>
